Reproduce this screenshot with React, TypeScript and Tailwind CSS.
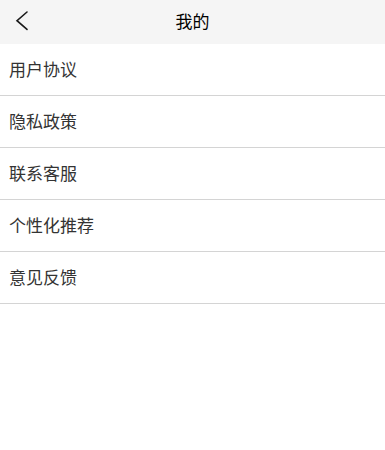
const items = ['用户协议', '隐私政策', '联系客服', '个性化推荐', '意见反馈'];

export default function App() {
    return (
        <div className="min-h-screen bg-white" style={{ fontFamily: '"Noto Sans CJK SC", "Liberation Sans", sans-serif' }}>
            {/* Header */}
            <div className="relative flex h-[44px] items-center justify-center bg-[#f5f5f5] pb-[4px]">
                <svg className="absolute left-0 top-0 h-[44px] w-[44px]" viewBox="0 0 44 44" fill="none">
                    <polyline points="27,12 17,20.7 27,29.4" stroke="#1a1a1a" strokeWidth="1.6" strokeLinecap="round" strokeLinejoin="miter" />
                </svg>
                <h1 className="text-[17px] leading-none text-black">我的</h1>
            </div>

            {/* List */}
            <ul>
                {items.map((item) => (
                    <li key={item} className="flex h-[52px] items-center border-b border-[#d4d4d4] pb-[2px] pl-[9px] text-[17px] text-[#333]">
                        {item}
                    </li>
                ))}
            </ul>
        </div>
    );
}
